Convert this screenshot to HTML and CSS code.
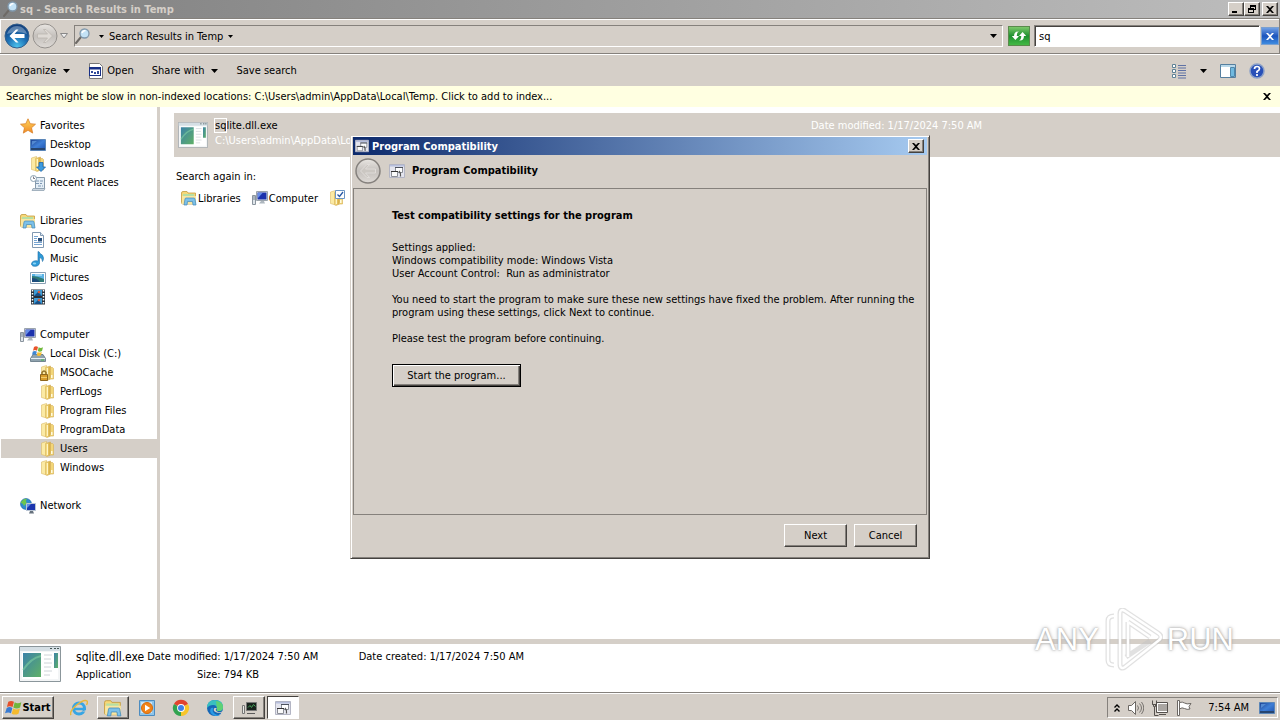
FILE: index.html
```html
<!DOCTYPE html>
<html lang="en">
<head>
<meta charset="utf-8">
<title>sq - Search Results in Temp</title>
<link rel="stylesheet" href="styles.css">
</head>
<body>
<svg class="defs" aria-hidden="true">
  <defs>
    <linearGradient id="gFolder" x1="0" x2="1"><stop offset="0" stop-color="#fbe692"/><stop offset="1" stop-color="#d3a63a"/></linearGradient>
    <linearGradient id="gScreen" x1="0" x2="1" y2="1"><stop offset="0" stop-color="#1b3f8f"/><stop offset=".5" stop-color="#3f7fd6"/><stop offset="1" stop-color="#1c4fae"/></linearGradient>
    <linearGradient id="gStar" x2="0" y2="1"><stop offset="0" stop-color="#ffd75e"/><stop offset="1" stop-color="#f08a24"/></linearGradient>
    <linearGradient id="gPane" x1="0" x2="1" y2="1"><stop offset="0" stop-color="#3b82a8"/><stop offset="1" stop-color="#5fb067"/></linearGradient>
    <radialGradient id="gBack" cx=".5" cy=".95" r=".9"><stop offset="0" stop-color="#4cc4ee"/><stop offset=".5" stop-color="#1c6fb4"/><stop offset="1" stop-color="#123f7c"/></radialGradient>
    <linearGradient id="gGrey" x2="0" y2="1"><stop offset="0" stop-color="#e9e6e2"/><stop offset=".5" stop-color="#c4c0bc"/><stop offset="1" stop-color="#dedad6"/></linearGradient>
    <symbol id="close" viewBox="0 0 8 7"><path d="M0 0h2l2 2 2-2h2L5 3.500 8 7H6L4 5 2 7H0l3-3.500z"/></symbol>
    <symbol id="search" viewBox="0 0 16 16"><path d="M1 15l5-6" stroke="#6e6a66" stroke-width="2" stroke-linecap="round"/><circle cx="9.500" cy="5.500" r="4.500" fill="#c3e2f6" stroke="#8098ac" stroke-width="1.300"/><path d="M7 5q1-2.500 3.500-2.500" stroke="#fff" fill="none" stroke-width="1.500"/></symbol>
    <symbol id="star" viewBox="0 0 16 16"><path d="M8 .8l2.200 4.900 5.300.5-4 3.600 1.200 5.300L8 12.300l-4.700 2.800 1.200-5.300-4-3.600 5.300-.5z" fill="url(#gStar)" stroke="#d9822b" stroke-width=".8"/></symbol>
    <symbol id="desktop" viewBox="0 0 16 16"><path d="M.5 2.500h15v11H.5z" fill="url(#gScreen)" stroke="#5b86b8"/><path d="M1 11h14v2H1z" fill="#27456f"/><path d="M2 4h5L2 8z" fill="#6ea8e8" opacity=".6"/></symbol>
    <symbol id="folder" viewBox="0 0 16 16"><path d="M1.500 2l5-1.500v14.500L1.500 13.500z" fill="#fbeaa4" stroke="#dcbb66" stroke-width=".6"/><path d="M5.500 2.500l5-1.500v13l-3.500 1.500-1.500-1z" fill="url(#gFolder)" stroke="#d3ad52" stroke-width=".6"/><path d="M10.500 2.500h2l1 1V14h-4l1-2z" fill="#f3d678" stroke="#d3ad52" stroke-width=".6"/><path d="M7.500 3v11" stroke="#fff5c8"/><path d="M11 10h1.500v3H11z" fill="#fffbe0"/></symbol>
    <symbol id="downloads" viewBox="0 0 16 16"><use href="#folder"/><path d="M9 6.500h4V11h2.500L11 15.500 6.500 11H9z" fill="#3c9be0" stroke="#1c66ae" stroke-width=".8"/></symbol>
    <symbol id="recent" viewBox="0 0 16 16"><path d="M3.500 2.500h11v11h-9v-9z" fill="#e4eef6" stroke="#879aab"/><path d="M6 6h7M6 8.500h6M8 11h5" stroke="#7f98b4" stroke-dasharray="3 1"/><path d="M3 13.500h12l-1 2H2z" fill="#cbd5df" stroke="#879aab" stroke-width=".7"/><circle cx="3.500" cy="3.500" r="3" fill="#fff" stroke="#8ba0b1"/><path d="M3.500 1.500v2H5" stroke="#445" fill="none" stroke-width=".7"/></symbol>
    <symbol id="libraries" viewBox="0 0 16 16"><path d="M.5 3q0-1.500 1.500-1.500h4l1 1.500h7.500v4L12 14H2q-1.500 0-1.500-1.500z" fill="#f6d879" stroke="#c49c3f" stroke-width=".8"/><path d="M2 4h11v3H2z" fill="#b6dfa4"/><path d="M1 6h14v8H1z" fill="#f9e6a1"/><path d="M3 15l1-6q.2-1 1-1h8q.8 0 1 1l1 6h-3l-.5-3.500h-5L6 15z" fill="#7cc1ea" stroke="#4288b8" stroke-width=".7"/></symbol>
    <symbol id="documents" viewBox="0 0 16 16"><path d="M2.500.5h8l3 3v12h-11z" fill="#fff" stroke="#8199b2"/><path d="M10.500.5v3h3" fill="#dce8f3" stroke="#8199b2"/><path d="M4 4.500h4M4 6.500h3M4 8.500h3M4 10.500h8M4 12.500h8" stroke="#76a4d2"/><path d="M8 6h4v3.500H8z" fill="#284f7c"/></symbol>
    <symbol id="music" viewBox="0 0 16 16"><path d="M8 .5q1.500 0 2 2 3.500 1.500 3.500 4.500 0 2-1 3.500Q12.500 7 9.500 6.500V12c0 4-8 4.500-8 1 0-2.800 4-4 6.500-2.800z" fill="#2e9bd8" stroke="#1e6da5" stroke-width=".6"/><ellipse cx="4.500" cy="12.500" rx="1.700" ry="1" fill="#8bd3f5"/></symbol>
    <symbol id="pictures" viewBox="0 0 16 16"><path d="M.5 2.500h15v11H.5z" fill="#fff" stroke="#8ba1b5"/><path d="M2 4h12v8H2z" fill="#59b2e4"/><path d="M2 6q5 0 12 3v3H2z" fill="#2f7a75"/><path d="M2 8q5 0 8 4H2z" fill="#1d4d7c"/><path d="M5 5h7" stroke="#d8f2ff"/></symbol>
    <symbol id="videos" viewBox="0 0 16 16"><path d="M1 .5h14v15H1z" fill="#28303a"/><path d="M4 1h8v6H4zM4 9h8v6H4z" fill="#3c9bd5"/><path d="M4 7l4-4 4 4zM4 15l4-4 4 4z" fill="#174f86"/><circle cx="9" cy="3" r="1.300" fill="#d65c3f"/><circle cx="9" cy="11" r="1.300" fill="#d65c3f"/><path d="M2.500 1v14M13.500 1v14" stroke="#fff" stroke-width="1.500" stroke-dasharray="1.500 1.500"/></symbol>
    <symbol id="computer" viewBox="0 0 16 16"><path d="M.5 5.500h3v9h-3z" fill="#dfe5ea" stroke="#8a949e"/><path d="M1 7h2M1 9h2" stroke="#70808f"/><path d="M4.500 1.500h11v9h-11z" fill="#dfe5ea" stroke="#9ba4ad"/><path d="M5.500 2.500h9v7h-9z" fill="#1c32ad"/><path d="M6 3h4.500L6 8z" fill="#668fe9"/><path d="M9 11h3l1 2.500H7z" fill="#aeb7bf"/></symbol>
    <symbol id="disk" viewBox="0 0 16 16"><path d="M3 8.500h10l2.500 4v3H.5v-3z" fill="#8fa2ae" stroke="#5e7280" stroke-width=".8"/><path d="M1 12.500h14" stroke="#e7eff4"/><path d="M11 13.500h3v1h-3z" fill="#41b84a"/><path d="M4 1q2-1.500 4 0L7 4.800q-2-1.500-4 0z" fill="#e8542b"/><path d="M8.700 1.300q2 1.500 4.300 0L12 5q-2 1.500-4.200 0z" fill="#70b83b"/><path d="M2.800 5.600q2-1.300 4 0L6 9q-2-1.500-4 0z" fill="#3d86d4"/><path d="M7.600 5.900q2 1.400 4.200 0L11 9.300q-2 1.300-4.200 0z" fill="#f6bd2f"/></symbol>
    <symbol id="locked" viewBox="0 0 16 16"><use href="#folder"/><path d="M2 10V7.500q2-3 4 0V10" fill="none" stroke="#95742b" stroke-width="1.500"/><path d="M.5 9.500h7v6h-7z" fill="#d89d2c" stroke="#8d651d"/><path d="M1 12.500h6" stroke="#f4cd6b"/></symbol>
    <symbol id="network" viewBox="0 0 16 16"><circle cx="6" cy="6" r="5.500" fill="#2f8bd1" stroke="#1c659e" stroke-width=".6"/><path d="M1 4q3-4 6-3Q5 3 7 5L4 8Q3 5 1 5z" fill="#6dc54f"/><path d="M6.500 5.500h9v7h-9z" fill="#1b35af" stroke="#bac6d4"/><path d="M7 6h4l-4 4z" fill="#628de8"/><path d="M10 13h3l1 2.500H9z" fill="#66717d"/></symbol>
    <symbol id="foldercheck" viewBox="0 0 16 16"><use href="#folder"/><path d="M6.500.5h9v8h-9z" fill="#fff" stroke="#6b95c4"/><path d="M8.500 4.500l2 2 3.500-4.500" fill="none" stroke="#2758a5" stroke-width="1.300"/></symbol>
    <symbol id="compat" viewBox="0 0 16 16"><path d="M.5 1.500h15v13H.5z" fill="#e4e5ee" stroke="#b3b5c4"/><path d="M1 2h14v1.500H1z" fill="#b7bfdd"/><path d="M6.500 4.500h7v5h-7z" fill="#fff" stroke="#8b8e96"/><path d="M6 4.500h8" stroke="#4d525e"/><path d="M2.500 8.500h6v5h-6z" fill="#fafafa" stroke="#8b8e96"/><path d="M2 8.500h7" stroke="#333"/><path d="M10 8q2 2 1.500 5.500" stroke="#555" fill="none" stroke-width="1.300"/></symbol>
    <symbol id="exe" viewBox="0 0 42 36"><path d="M.5.500h41v35H.5z" fill="#f3f5f6" stroke="#8b969b"/><path d="M1 1h40v4H1z" fill="#d5dfe5"/><path d="M31 2h2v1h-2zM35 2h2v1h-2zM38 2h2v1h-2z" fill="#455"/><path d="M3 6h36v27H3z" fill="#fff"/><path d="M4 7h18v24H4z" fill="url(#gPane)"/><path d="M4 24Q12 12 22 10" stroke="#7fcfa1" fill="none" opacity=".6" stroke-width="2"/><path d="M25 9h8M25 13h7M25 17h8M25 21h7M25 25h8M25 29h6" stroke="#ced4d8" stroke-width="1"/><path d="M35 7h4v15h-4z" fill="url(#gPane)"/></symbol>
    <symbol id="open" viewBox="0 0 16 16"><path d="M1.500.5h10l3 3v12h-13z" fill="#fff" stroke="#777"/><path d="M1 4h12v9H1z" fill="#172f86"/><path d="M2 6.500h10v5.500H2z" fill="#fff"/><path d="M3 8h2v2H3zM6 9h2v2H6zM9 8h2v3H9z" fill="#334c9b"/></symbol>
    <symbol id="flag4" viewBox="0 0 18 16"><path d="M3.500 1.500q3-2 6 0L8 7Q5 5.500 2 7z" fill="#e5502b"/><path d="M10.300 2q3 2 7 0L16 7.500q-3.500 2-7.200 0z" fill="#70b63c"/><path d="M1.800 8q3-2 6 0l-1.500 5.500Q3.500 12 0 13.500z" fill="#397bd2"/><path d="M8.600 8.500q3.500 2 7.200 0L14.300 14q-3.800 2-7.200 0z" fill="#f5ba2e"/></symbol>
  </defs>
</svg>

<div class="desktop">
  <header class="titlebar">
    <svg class="i16"><use href="#search"/></svg>
    <h1 class="title">sq - Search Results in Temp</h1>
    <button class="winbtn" aria-label="Minimize"><svg viewBox="0 0 8 8"><path d="M0 6h5v2H0z"/></svg></button>
    <button class="winbtn" aria-label="Restore"><svg viewBox="0 0 8 8"><path d="M2 0h6v5H6V4h1V2H3v1H2zM0 3h6v5H0zM1 5v2h4V5z"/></svg></button>
    <button class="winbtn close" aria-label="Close"><svg class="x"><use href="#close"/></svg></button>
  </header>

  <nav class="navbar">
    <button class="round back" aria-label="Back"><svg viewBox="0 0 26 26"><circle cx="13" cy="13" r="12" fill="url(#gBack)" stroke="#35608c"/><path d="M3 11q3-8 10-8t10 8q-10-4-20 0z" fill="#fff" opacity=".3"/><path d="M5.500 13L12 6.500h2.500l-4 4.500h10v4h-10l4 4.500H12z" fill="#fff"/></svg></button>
    <button class="round" aria-label="Forward"><svg viewBox="0 0 26 26"><circle cx="13" cy="13" r="12" fill="url(#gGrey)" stroke="#95918d"/><path d="M20.500 13L14 6.500h-2.500l4 4.500h-10v4h10l-4 4.500H14z" fill="#dedad5" stroke="#bbb6b0" stroke-width=".8"/></svg></button>
    <button class="flat history" aria-label="Recent pages"><svg viewBox="0 0 8 6"><path d="M.5.500h7L4 5z" fill="#eee" stroke="#888"/></svg></button>
    <div class="address">
      <svg class="i16"><use href="#search"/></svg>
      <svg class="tri" viewBox="0 0 5 3"><path d="M0 0h5L2.500 3z"/></svg>
      <span>Search Results in Temp</span>
      <svg class="tri" viewBox="0 0 5 3"><path d="M0 0h5L2.500 3z"/></svg>
      <button class="flat drop" aria-label="Previous locations"><svg class="tri big" viewBox="0 0 7 4"><path d="M0 0h7L3.500 4z"/></svg></button>
    </div>
    <button class="refresh" aria-label="Refresh"><svg viewBox="0 0 20 20"><path d="M2 10l4 4.500 4-4.500H7.500q0-4 2.500-5-5.500-.5-5.500 5z" fill="#fff"/><path d="M10 10l4-4.500 4 4.500h-2.500q0 5.500-5.500 5 2.500-1 2.500-5z" fill="#fff"/></svg></button>
    <input class="search" type="text" value="sq" aria-label="Search">
    <button class="clear" aria-label="Clear search"><svg class="x"><use href="#close"/></svg></button>
  </nav>

  <div class="commands" role="toolbar">
    <button class="flat">Organize <svg class="tri big" viewBox="0 0 7 4"><path d="M0 0h7L3.500 4z"/></svg></button>
    <button class="flat opener"><svg class="i16"><use href="#open"/></svg>Open</button>
    <button class="flat">Share with <svg class="tri big" viewBox="0 0 7 4"><path d="M0 0h7L3.500 4z"/></svg></button>
    <button class="flat">Save search</button>
    <span class="spacer"></span>
    <button class="flat" aria-label="Change view"><svg class="i16" viewBox="0 0 16 16"><path d="M1.500 1.500h3v3h-3zM1.500 6.500h3v3h-3zM1.500 11.500h3v3h-3z" fill="#fff" stroke="#5e8296"/><path d="M7 2.500h8M7 5h8M7 7.500h8M7 10h8M7 12.500h8M7 15h8" stroke="#5f72a5"/></svg></button>
    <button class="flat" aria-label="More views"><svg class="tri big" viewBox="0 0 7 4"><path d="M0 0h7L3.500 4z"/></svg></button>
    <button class="flat" aria-label="Preview pane"><svg class="i16" viewBox="0 0 16 16"><path d="M.5 1.500h15v13H.5z" fill="#fff" stroke="#557f9f"/><path d="M1 2h14v2H1z" fill="#b8d8ea"/><path d="M10.500 4.500h4v9h-4z" fill="#70b9df" stroke="#4e87ab"/></svg></button>
    <button class="flat" aria-label="Help"><svg class="i16" viewBox="0 0 16 16"><circle cx="8" cy="8" r="7" fill="#2850b8" stroke="#8aa0c8" stroke-width="1.500"/><path d="M5.500 6q0-2.500 2.500-2.500t2.500 2.200Q10.500 7 8 8.500V10M8 11v2" fill="none" stroke="#fff" stroke-width="1.700"/></svg></button>
  </div>

  <div class="infobar">
    <span>Searches might be slow in non-indexed locations: C:\Users\admin\AppData\Local\Temp. Click to add to index...</span>
    <button class="flat" aria-label="Dismiss"><svg class="x"><use href="#close"/></svg></button>
  </div>

  <div class="main">
    <aside class="tree">
      <ul>
        <li><svg class="i16"><use href="#star"/></svg>Favorites</li>
        <li class="l1"><svg class="i16"><use href="#desktop"/></svg>Desktop</li>
        <li class="l1"><svg class="i16"><use href="#downloads"/></svg>Downloads</li>
        <li class="l1"><svg class="i16"><use href="#recent"/></svg>Recent Places</li>
      </ul>
      <ul>
        <li><svg class="i16"><use href="#libraries"/></svg>Libraries</li>
        <li class="l1"><svg class="i16"><use href="#documents"/></svg>Documents</li>
        <li class="l1"><svg class="i16"><use href="#music"/></svg>Music</li>
        <li class="l1"><svg class="i16"><use href="#pictures"/></svg>Pictures</li>
        <li class="l1"><svg class="i16"><use href="#videos"/></svg>Videos</li>
      </ul>
      <ul>
        <li><svg class="i16"><use href="#computer"/></svg>Computer</li>
        <li class="l1"><svg class="i16"><use href="#disk"/></svg>Local Disk (C:)</li>
        <li class="l2"><svg class="i16"><use href="#locked"/></svg>MSOCache</li>
        <li class="l2"><svg class="i16"><use href="#folder"/></svg>PerfLogs</li>
        <li class="l2"><svg class="i16"><use href="#folder"/></svg>Program Files</li>
        <li class="l2"><svg class="i16"><use href="#folder"/></svg>ProgramData</li>
        <li class="l2 selected"><svg class="i16"><use href="#folder"/></svg>Users</li>
        <li class="l2"><svg class="i16"><use href="#folder"/></svg>Windows</li>
      </ul>
      <ul>
        <li><svg class="i16"><use href="#network"/></svg>Network</li>
      </ul>
    </aside>
    <main class="results">
      <article class="result">
        <svg class="exe" viewBox="0 0 42 36"><use href="#exe"/></svg>
        <div class="file"><div><mark>sq</mark>lite.dll.exe</div><div class="path">C:\Users\admin\AppData\Lo</div></div>
        <div class="modified">Date modified: 1/17/2024 7:50 AM</div>
      </article>
      <p class="again">Search again in:</p>
      <div class="places">
        <a href="#libs"><svg class="i16"><use href="#libraries"/></svg>Libraries</a>
        <a href="#comp"><svg class="i16"><use href="#computer"/></svg>Computer</a>
        <a href="#custom" aria-label="Custom"><svg class="i16"><use href="#foldercheck"/></svg></a>
      </div>
    </main>
  </div>

  <footer class="details">
    <svg class="exebig"><use href="#exe"/></svg>
    <div class="props">
      <span class="name">sqlite.dll.exe</span><span class="label">Date modified:</span><span>1/17/2024 7:50 AM</span><span class="label">Date created:</span><span>1/17/2024 7:50 AM</span>
      <span>Application</span><span class="label">Size:</span><span>794 KB</span>
    </div>
  </footer>

  <div class="taskbar">
    <button class="start"><svg viewBox="0 0 18 16"><use href="#flag4"/></svg>Start</button>
    <div class="tasks">
      <button class="task" aria-label="Internet Explorer"><svg viewBox="0 0 18 18"><circle cx="9" cy="9.500" r="5.500" fill="none" stroke="#37a5e4" stroke-width="3"/><path d="M4 10h12" stroke="#37a5e4" stroke-width="2.500"/><path d="M11.500 12.500H17V11z" fill="#d5cfc8"/><path d="M1 16Q-1 13 6 6.500 14 0 17 2q1 1-.5 4" fill="none" stroke="#e8b83c" stroke-width="1.500"/></svg></button>
      <button class="task raised" aria-label="Explorer"><svg viewBox="0 0 16 16"><use href="#libraries"/></svg></button>
      <button class="task" aria-label="Media Player"><svg viewBox="0 0 18 18"><path d="M1.500 1.500h15v15h-15z" fill="#8fc5ea" stroke="#4d8cc0"/><path d="M3 3h11v11H3z" fill="#c9e4f6"/><circle cx="9" cy="9" r="5.500" fill="#f28318" stroke="#d56a0c"/><path d="M7 5.800v6.400L12.200 9z" fill="#fff"/></svg></button>
      <button class="task" aria-label="Chrome"><svg viewBox="0 0 18 18"><path d="M9 9L2 4.900A8 8 0 0 1 16 5z" fill="#e1432f"/><path d="M9 9l7-4a8 8 0 0 1-7 12z" fill="#f7c52a"/><path d="M9 9v8A8 8 0 0 1 2 4.900z" fill="#31a350"/><circle cx="9" cy="9" r="3.900" fill="#fff"/><circle cx="9" cy="9" r="3" fill="#3f80e8"/></svg></button>
      <button class="task" aria-label="Edge"><svg viewBox="0 0 18 18"><circle cx="9" cy="9" r="8" fill="#1767b5"/><path d="M1 9Q1 1 9 1q8 0 8 7 0 4-4 4-3 0-2-2 .5-4-4-4Q3 6 1 9z" fill="#39bfc0"/><path d="M10 2q7 1 7 6 0 4-4 4-3 0-2-2z" fill="#5fd174"/><path d="M7.500 9q-2 3 1 5.500t7 .5Q12 18 8 16.500 3 14 4.500 10q1-2 3-1z" fill="#2b9ae4"/><path d="M11 9q-3 2 1 4 2 .8 5-1l-.5 1.500q-4 1-7-.5T8.500 9z" fill="#d5cfc8"/></svg></button>
      <button class="task raised" aria-label="System"><svg viewBox="0 0 18 18"><path d="M6.500 3.500h10v8h-10z" fill="#17211c" stroke="#777"/><path d="M8 8.500l2-2 1.500 2 2-3 2 2" fill="none" stroke="#47a35a"/><path d="M2.500 6.500h2v8h-2z" fill="#e9e9e5" stroke="#777"/><path d="M7 14.500h8" stroke="#5b5b5b"/></svg></button>
      <button class="task pressed" aria-label="Program Compatibility"><svg viewBox="0 0 16 16"><use href="#compat"/></svg></button>
    </div>
    <div class="tray">
      <button class="flat" aria-label="Show hidden icons"><svg class="chev" viewBox="0 0 6 8"><path d="M.5 3.500L3 1l2.500 2.500M.5 7.500L3 5l2.500 2.500" fill="none" stroke="#000" stroke-width="1.400"/></svg></button>
      <svg class="i16" viewBox="0 0 16 16"><path d="M.5 5.500h3l4-4v13l-4-4h-3z" fill="#fff" stroke="#6b6763"/><path d="M9.500 5.500q2 2.500 0 5M11.500 3.500q4 4.500 0 9M13.500 2q4.500 6 0 12" fill="none" stroke="#77736f"/></svg>
      <svg class="i16" viewBox="0 0 16 16"><path d="M5.500 3.500h10v8h-10z" fill="#aaa6a2" stroke="#fff"/><path d="M4.500 2.500h11v10h-11zM7 14.500h7" fill="none" stroke="#55514d"/><path d="M.5.500v4h1v2h1v9h4M4.500.500v4h-1v2h-1M.5 4.500h4" fill="none" stroke="#55514d"/></svg>
      <svg class="i16" viewBox="0 0 16 16"><path d="M1.500.500h2v15h-2z" fill="#fff" stroke="#6b6763"/><path d="M3.500 2.500q3-1 5 .5t6.500.5l-2 3 1 2.500q-3 1-5.500-.500t-5 .5z" fill="#fff" stroke="#6b6763"/></svg>
      <time class="clock">7:54 AM</time>
      <svg class="i16"><use href="#desktop"/></svg>
    </div>
  </div>

  <div class="watermark"><span>ANY</span><svg viewBox="0 0 60 64"><path d="M11 8Q5 8 5 13v39q0 5 6 5M17 6q0-6 5-3l33 22q6 4 0 8L22 59q-5 3-5-3zM25 14v35M25 14l22 15M23 49l24-16" fill="none" stroke="#c4c4c4" stroke-width="5" opacity=".5"/><path d="M11 8Q5 8 5 13v39q0 5 6 5M17 6q0-6 5-3l33 22q6 4 0 8L22 59q-5 3-5-3zM25 14v35M25 14l22 15" fill="none" stroke="#fff" stroke-width="2.500"/></svg><span>RUN</span></div>

  <section class="dialog" role="dialog" aria-label="Program Compatibility">
    <header class="dlgtitle"><svg class="i14"><use href="#compat"/></svg><span>Program Compatibility</span><button class="winbtn" aria-label="Close"><svg class="x"><use href="#close"/></svg></button></header>
    <div class="dlghead">
      <button class="round" aria-label="Back"><svg viewBox="0 0 26 26"><circle cx="13" cy="13" r="12" fill="url(#gGrey)" stroke="#85817d" stroke-width="1.500"/><path d="M5.500 13L12 6.500h2.500l-4 4.500h10v4h-10l4 4.500H12z" fill="#cbc7c2" stroke="#e4e1de" stroke-width=".8"/></svg></button>
      <svg class="i16"><use href="#compat"/></svg><span>Program Compatibility</span>
    </div>
    <div class="dlgbody">
      <h2>Test compatibility settings for the program</h2>
      <p>Settings applied:<br>Windows compatibility mode: Windows Vista<br>User Account Control:&nbsp; Run as administrator</p>
      <p>You need to start the program to make sure these new settings have fixed the problem. After running the<br>program using these settings, click Next to continue.</p>
      <p>Please test the program before continuing.</p>
      <button class="push default">Start the program...</button>
    </div>
    <div class="dlgfoot"><button class="push">Next</button><button class="push">Cancel</button></div>
  </section>
</div>
</body>
</html>
```

FILE: styles.css
```css
:root {
  --face: #d5cfc8;
  --shadow: #85817c;
  --dark: #45423f;
}
* { box-sizing: border-box; }
body, button, input {
  font-family: "DejaVu Sans Condensed", "DejaVu Sans", sans-serif;
  font-size: 11px;
  line-height: 13px;
  color: #000;
}
body { margin: 0; background: #fff; }
p, h1, h2, ul { margin: 0; padding: 0; font-size: inherit; }
ul { list-style: none; }
button { margin: 0; padding: 0; flex: none; }
svg { display: block; flex: none; }
.defs { position: absolute; width: 0; height: 0; }
.i16 { width: 16px; height: 16px; }
.i14 { width: 14px; height: 14px; }
.tri { width: 5px; height: 3px; }
.tri.big { width: 7px; height: 4px; }
.spacer { flex: 1; }
.flat { border: 0; background: none; display: flex; align-items: center; }

.desktop { position: relative; display: flex; flex-direction: column; height: 100vh; overflow: hidden; white-space: nowrap; }

.titlebar { display: flex; align-items: center; height: 18px; padding: 0 2px 0 3px; background: linear-gradient(90deg, #808080, #bdbdbd); }
.title { flex: 1; padding-left: 1px; color: var(--face); font-weight: bold; }
.winbtn { width: 16px; height: 14px; display: flex; align-items: center; justify-content: center; background: var(--face); border: 1px solid; border-color: #fff var(--dark) var(--dark) #fff; box-shadow: inset -1px -1px var(--shadow); }
.winbtn svg { width: 8px; height: 8px; }
.winbtn.close { margin-left: 2px; }
svg.x { width: 8px; height: 7px; }

.navbar { display: flex; align-items: center; height: 36px; padding: 0 0 0 4px; background: var(--face); border: solid var(--shadow); border-width: 1px 1px 1px 0; box-shadow: inset 0 1px #fff, inset 1px 0 #fff; }
.round { width: 26px; height: 26px; border: 0; background: none; }
.round svg { width: 26px; height: 26px; }
.back { margin-right: 2px; }
.history { margin: 0 4px 0 2px; }
.history svg { width: 8px; height: 6px; }
.address { flex: 1; display: flex; align-items: center; gap: 5px; height: 22px; margin: 0 5px 0 2px; border: 1px solid; border-color: var(--shadow) #fff #fff var(--shadow); }
.address .i16 { margin-right: 3px; }
.drop { margin-left: auto; padding-right: 5px; }
.refresh { width: 22px; height: 20px; padding: 0; border: 1px solid #5a8a4c; background: linear-gradient(#7cc86a, #1f9030 50%, #43b944); }
.refresh svg { width: 20px; height: 18px; }
.search { width: 226px; height: 22px; margin: 0 1px 0 4px; padding: 0 4px; background: #fff; border: 1px solid; border-color: var(--shadow) #fff #fff var(--shadow); box-shadow: inset 1px 1px var(--dark); border-radius: 0; outline: 0; }
.clear { width: 18px; height: 18px; display: flex; align-items: center; justify-content: center; border: 1px solid #7aa0d0; background: linear-gradient(#6f9fe4, #1c55bd 50%, #3d8be0); }
.clear svg { fill: #fff; }

.commands { display: flex; align-items: center; height: 32px; padding: 0 15px 0 12px; background: var(--face); border-top: 1px solid #fff; gap: 18px; }
.commands .flat { gap: 7px; }
.commands .opener { gap: 3px; }
.commands .spacer ~ .flat { margin-left: -5px; }

.infobar { display: flex; align-items: center; justify-content: space-between; height: 21px; padding: 0 9px 0 6px; background: #ffffe1; }

.main { flex: 1; display: flex; min-height: 0; }
.tree { width: 160px; flex: none; padding: 9px 0 0 1px; border-right: 3px solid var(--face); overflow: hidden; }
.tree ul { margin-bottom: 19px; }
.tree li { display: flex; align-items: center; gap: 4px; height: 19px; padding-left: 19px; }
.tree .l1 { padding-left: 29px; }
.tree .l2 { padding-left: 39px; }
.tree .selected { background: var(--face); }
.results { flex: 1; min-width: 0; padding: 6px 0 0 14px; }
.result { display: flex; height: 44px; padding: 5px 4px; background: var(--face); }
.exe { width: 30px; height: 34px; }
.file { width: 600px; padding-left: 7px; line-height: 15px; }
.path, .modified { color: #fff; }
mark { background: none; color: inherit; outline: 1px solid #fff; }
.modified { padding-left: 3px; line-height: 15px; }
.again { padding: 13px 0 0 2px; }
.places { display: flex; gap: 11px; padding: 7px 7px 0; }
.places a { display: flex; align-items: center; gap: 1px; color: #000; text-decoration: none; }

.details { display: flex; align-items: flex-start; height: 53px; padding: 2px 19px; border-top: 5px solid var(--face); background: #fff; }
.exebig { width: 42px; height: 36px; }
.props { display: grid; grid-template-columns: auto auto 132px auto auto; column-gap: 3px; row-gap: 2px; padding: 3px 0 0 15px; line-height: 16px; }
.name { font-size: 12px; }
.label { text-align: right; }

.taskbar { display: flex; align-items: center; height: 28px; padding: 2px 2px 0 2px; background: var(--face); border-top: 1px solid var(--shadow); box-shadow: inset 0 1px #fff; }
.start, .task { height: 23px; border: 1px solid transparent; background: none; display: flex; align-items: center; justify-content: center; }
.start, .raised, .push { background: var(--face); border: 1px solid; border-color: #fff var(--dark) var(--dark) #fff; box-shadow: inset -1px -1px var(--shadow); }
.start { width: 52px; font-weight: bold; }
.start svg { width: 17px; height: 16px; }
.tasks { display: flex; gap: 2px; margin-left: 9px; flex: 1; }
.task { width: 32px; }
.task svg { width: 18px; height: 18px; }
.pressed { background: #fff; border-color: var(--dark) #fff #fff var(--dark); }
.pressed svg { width: 16px; height: 16px; }
.tray { display: flex; align-items: center; gap: 8px; height: 21px; padding: 0 2px 0 6px; border: 1px solid; border-color: var(--shadow) #fff #fff var(--shadow); }
.chev { width: 6px; height: 8px; }
.clock { padding: 0 2px 0 8px; }

.watermark { position: absolute; right: 46px; bottom: 48px; display: flex; align-items: center; gap: 4px; color: #fff; font-family: "Liberation Sans", sans-serif; font-size: 31px; line-height: 64px; text-shadow: 0 0 2px #999, 0 0 4px #bbb; }
.watermark svg { width: 60px; height: 64px; }

.dialog { position: absolute; left: 350px; top: 135px; width: 580px; display: flex; flex-direction: column; padding: 1px; background: var(--face); border: 1px solid; border-color: var(--face) var(--dark) var(--dark) var(--face); box-shadow: inset 1px 1px #fff, inset -1px -1px var(--shadow); }
.dlgtitle { display: flex; align-items: center; gap: 3px; height: 18px; margin: 0 1px; padding: 0 3px 0 2px; color: #fff; font-weight: bold; background: linear-gradient(90deg, #0d2a6c, #a6caf0); }
.dlgtitle span { flex: 1; }
.dlghead { display: flex; align-items: center; height: 33px; padding: 0 0 2px 3px; font-weight: bold; }
.dlghead .i16 { margin: 0 7px 0 8px; }
.dlgbody { height: 327px; margin: 0 1px; padding: 20px 26px 0 38px; border: 1px solid var(--shadow); }
.dlgbody h2 { margin-bottom: 19px; }
.dlgbody p { margin-bottom: 13px; }
.push { width: 63px; height: 23px; }
.push.default { width: 129px; margin-top: 6px; border-color: #000; box-shadow: inset 1px 1px #fff, inset -1px -1px var(--dark), inset -2px -2px var(--shadow); }
.dlgfoot { display: flex; justify-content: flex-end; gap: 7px; padding: 9px 11px 10px; }
```
